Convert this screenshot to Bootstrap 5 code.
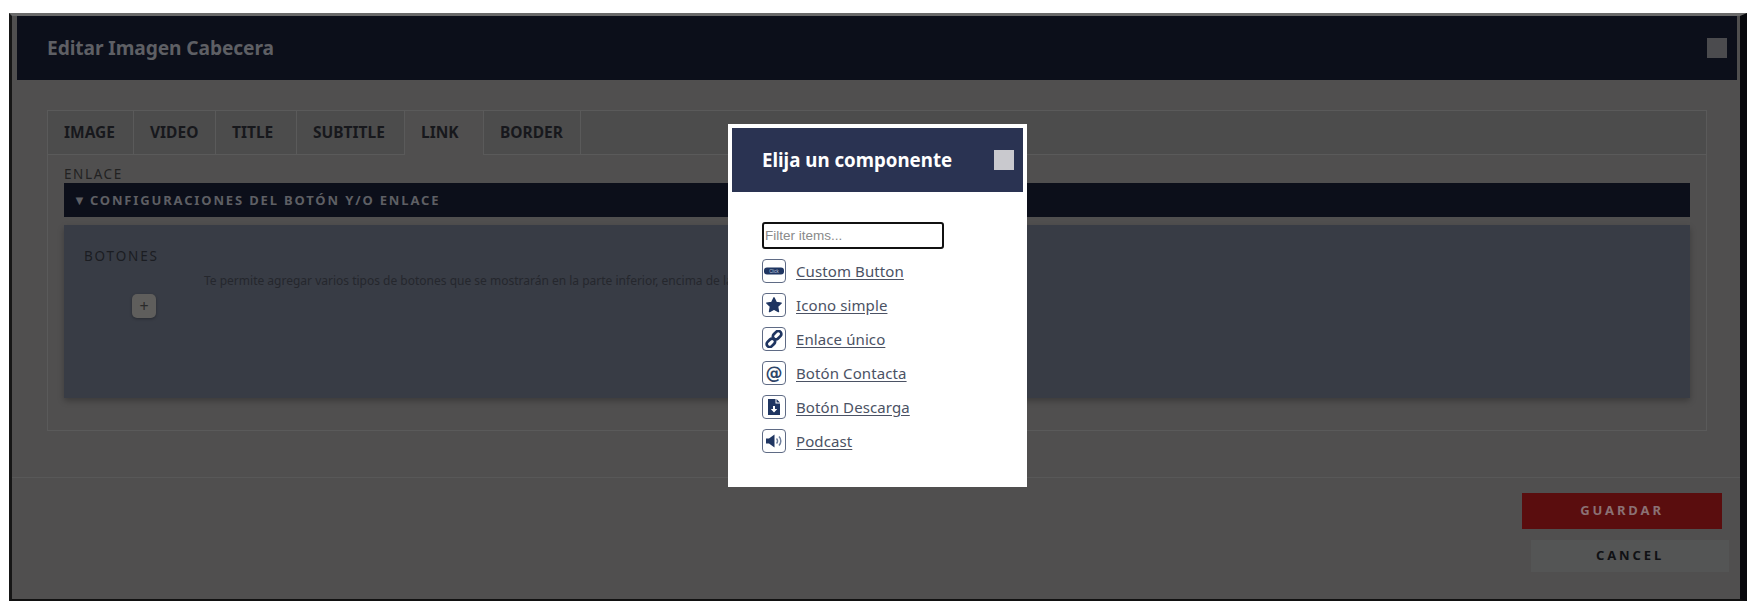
<!DOCTYPE html>
<html lang="es">
<head>
<meta charset="UTF-8">
<title>Editar Imagen Cabecera</title>
<link rel="stylesheet" href="https://cdn.jsdelivr.net/npm/bootstrap@5.3.2/dist/css/bootstrap.min.css">
<style>
  body { background: #fff; font-family: "Noto Sans", sans-serif; height: 615px; overflow: hidden; }
  .shell { margin: 13px 10px 0 9px; height: 588px; background: #504f4f; border-top: 3px solid #6a6a6a; border-left: 3px solid #161616; border-right: 7px solid #08090d; border-bottom: 2px solid #111; padding-left: 5px; padding-right: 3px; }
  .top-head { height: 64px; background: #0c0f1a; padding: 0 10px 0 30px; }
  .top-head h5 { color: #5e5f64; font-size: 19.2px; font-weight: 700; margin: 0; letter-spacing: -.1px; }
  .sq-close { width: 20px; height: 20px; background: #4b4b4e; }
  .edit-body { padding: 30px 30px 0 30px; }
  .tab-box { border: 1px solid #5a5a5a; height: 321px; }
  .tab-strip { height: 44px; background: #4c4c4c; border-bottom: 1px solid #5a5a5a; }
  .tab-cell { padding: 0 0 0 16px; border-right: 1px solid #5a5a5a; color: #17181c; font-size: 15.5px; font-weight: 700; line-height: 43px; height: 44px; }
  .tab-cell.on { background: #504f4f; }
  .tab-w1 { width: 86px; } .tab-w2 { width: 82px; } .tab-w3 { width: 81px; }
  .tab-w4 { width: 108px; } .tab-w5 { width: 79px; } .tab-w6 { width: 97px; }
  .tab-inner { padding: 10px 16px 0 16px; }
  .enlace { color: #222; font-size: 13.5px; letter-spacing: 1.6px; line-height: 18px; height: 18px; }
  .conf-bar { height: 34px; background: #0c0f1a; color: #5e5f64; font-size: 13px; font-weight: 700; letter-spacing: 1.85px; line-height: 34px; padding-left: 9px; }
  .conf-arrow { letter-spacing: 0; margin-right: 4px; }
  .blue-panel { margin-top: 8px; height: 173px; background: #383c45; position: relative; box-shadow: 0 3px 6px rgba(0,0,0,.25); padding: 22px 20px; }
  .botones { color: #1b1d22; font-size: 13.5px; letter-spacing: 1.85px; line-height: 18px; }
  .desc { color: #25272d; font-size: 12px; line-height: 16px; margin: 8px 0 0 120px; }
  .plus-btn { display: flex; width: 24px; height: 24px; margin: 5px 0 0 48px; background: #5f5e5c; border-radius: 5px; color: #2a2a2a; font-size: 16px; line-height: 1; align-items: center; justify-content: center; box-shadow: 0 1px 3px rgba(0,0,0,.3); }
  .foot-line { border-top: 1px solid #585858; margin: 46px -3px 0 -5px; padding-top: 15px; padding-right: 11px; }
  .save-btn, .cancel-btn { border: 0; border-radius: 0; font-size: 13px; font-weight: 700; letter-spacing: 2.9px; padding: 0; }
  .save-btn { width: 200px; height: 36px; background: #5a0d0e; color: #8b7174; margin-right: 7px; }
  .cancel-btn { width: 198px; height: 32px; margin-top: 11px; background: #545555; color: #101114; }
  .save-btn:hover { background: #5a0d0e; color: #8b7174; }
  .cancel-btn:hover { background: #545555; color: #101114; }
  .picker { position: absolute; left: 728px; top: 124px; width: 299px; height: 363px; background: #fff; border: 4px solid #fff; }
  .picker-head { height: 64px; background: #2a3352; padding: 0 9px 0 30px; }
  .picker-head h5 { color: #fff; font-size: 18.7px; font-weight: 700; margin: 0; }
  .picker-close { width: 20px; height: 20px; background: #c9c9ce; }
  .picker-body { padding: 30px 30px 0; }
  .filter { display: block; width: 182px; height: 27px; border: 2px solid #111; border-radius: 3px; font-family: "Liberation Sans", sans-serif; font-size: 13.5px; padding: 0 1px; outline: 0; }
  .filter::placeholder { color: #8a8a8a; }
  .comp-row { height: 24px; margin-top: 10px; gap: 10px; }
  .comp-ico { width: 24px; height: 24px; border: 1px solid #5f6b85; border-radius: 4px; color: #1f3561; }
  .comp-ico svg { display: block; }
  .at-sign { font-family: "DejaVu Sans", sans-serif; font-size: 17px; font-weight: 700; line-height: 1; color: #2e4568; }
  .comp-link { color: #4b5264; font-size: 15px; letter-spacing: .1px; text-underline-offset: 2px; }
</style>
</head>
<body>
  <div class="shell">
    <div class="top-head d-flex align-items-center justify-content-between">
      <h5>Editar Imagen Cabecera</h5>
      <div class="sq-close"></div>
    </div>
    <div class="edit-body">
      <div class="tab-box">
        <div class="tab-strip d-flex">
          <div class="tab-cell tab-w1">IMAGE</div>
          <div class="tab-cell tab-w2">VIDEO</div>
          <div class="tab-cell tab-w3">TITLE</div>
          <div class="tab-cell tab-w4">SUBTITLE</div>
          <div class="tab-cell tab-w5 on">LINK</div>
          <div class="tab-cell tab-w6">BORDER</div>
        </div>
        <div class="tab-inner">
          <div class="enlace">ENLACE</div>
          <div class="conf-bar"><span class="conf-arrow">▼</span>CONFIGURACIONES DEL BOTÓN Y/O ENLACE</div>
          <div class="blue-panel">
            <div class="botones">BOTONES</div>
            <div class="desc">Te permite agregar varios tipos de botones que se mostrarán en la parte inferior, encima de la imagen.</div>
            <div class="plus-btn">+</div>
          </div>
        </div>
      </div>
    </div>
    <div class="foot-line d-flex flex-column align-items-end">
      <button type="button" class="btn save-btn">GUARDAR</button>
      <button type="button" class="btn cancel-btn">CANCEL</button>
    </div>
  </div>

  <div class="picker">
    <div class="picker-head d-flex align-items-center justify-content-between">
      <h5>Elija un componente</h5>
      <div class="picker-close"></div>
    </div>
    <div class="picker-body">
      <input class="filter" type="text" placeholder="Filter items...">
      <div class="comp-row d-flex align-items-center">
        <span class="comp-ico d-flex align-items-center justify-content-center">
          <svg width="20" height="20" viewBox="0 0 20 20"><rect x="0" y="6.500" width="20" height="7" rx="3" fill="currentColor"/><text x="10" y="11.600" font-size="4.500" font-family="Liberation Sans, sans-serif" text-anchor="middle" fill="#b9c3d6">Click</text></svg>
        </span>
        <a class="comp-link" href="#">Custom Button</a>
      </div>
      <div class="comp-row d-flex align-items-center">
        <span class="comp-ico d-flex align-items-center justify-content-center">
          <svg width="18" height="18" viewBox="0 0 18 18"><path fill="currentColor" stroke="currentColor" stroke-width="1.400" stroke-linejoin="round" d="M9 1.800l2.200 4.600 5 .7-3.600 3.500.9 5L9 13.200l-4.500 2.400.9-5L1.800 7.100l5-.7z"/></svg>
        </span>
        <a class="comp-link" href="#">Icono simple</a>
      </div>
      <div class="comp-row d-flex align-items-center">
        <span class="comp-ico d-flex align-items-center justify-content-center">
          <svg width="18" height="18" viewBox="0 0 18 18" fill="none" stroke="currentColor" stroke-width="2.800"><rect x="7.400" y="2.200" width="9.400" height="6" rx="3" transform="rotate(-45 12.100 5.200)"/><rect x="1.200" y="9.800" width="9.400" height="6" rx="3" transform="rotate(-45 5.900 12.800)"/></svg>
        </span>
        <a class="comp-link" href="#">Enlace único</a>
      </div>
      <div class="comp-row d-flex align-items-center">
        <span class="comp-ico d-flex align-items-center justify-content-center"><span class="at-sign">@</span></span>
        <a class="comp-link" href="#">Botón Contacta</a>
      </div>
      <div class="comp-row d-flex align-items-center">
        <span class="comp-ico d-flex align-items-center justify-content-center">
          <svg width="18" height="18" viewBox="0 0 18 18"><path fill="currentColor" fill-rule="evenodd" d="M3 1h7.500v4.500H15V17H3zM11.500 1L15 4.500h-3.500zM8 8v3H5.800l3.200 3.400 3.300-3.400H10V8z"/></svg>
        </span>
        <a class="comp-link" href="#">Botón Descarga</a>
      </div>
      <div class="comp-row d-flex align-items-center">
        <span class="comp-ico d-flex align-items-center justify-content-center">
          <svg width="18" height="18" viewBox="0 0 18 18"><path fill="currentColor" d="M1 6.500h3L9.500 2.500v13L4 11.500H1z"/><path fill="none" stroke="#6f7f9c" stroke-width="1.500" d="M11.500 6.500a3.500 3.500 0 0 1 0 5M14 4.500a6.500 6.500 0 0 1 0 9"/></svg>
        </span>
        <a class="comp-link" href="#">Podcast</a>
      </div>
    </div>
  </div>
  <script src="https://cdn.jsdelivr.net/npm/bootstrap@5.3.2/dist/js/bootstrap.bundle.min.js"></script>
</body>
</html>
